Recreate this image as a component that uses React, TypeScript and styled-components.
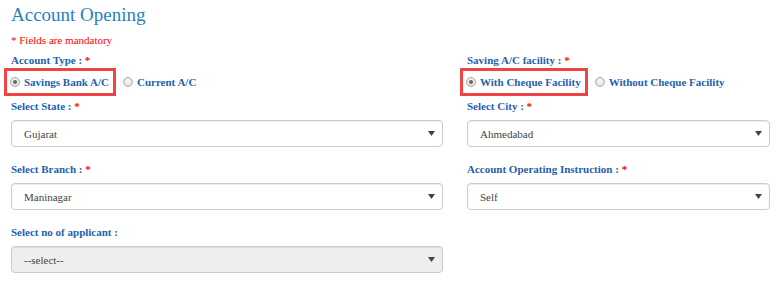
import styled, { createGlobalStyle } from "styled-components";

const serif = `"Liberation Serif", "Times New Roman", serif`;

const GlobalStyle = createGlobalStyle`
  body {
    margin: 0;
    background: #fff;
    font-family: ${serif};
  }
`;

const Page = styled.div`
  padding: 4px 0 0 11px;
  width: 767px;
`;

const Title = styled.h1`
  margin: 0;
  font-size: 19px;
  line-height: 22px;
  font-weight: 400;
  color: #2a7fc1;
`;

const Mandatory = styled.p`
  margin: 6px 0 0;
  font-size: 11px;
  line-height: 16px;
  color: #f00;
`;

const Grid = styled.div`
  display: grid;
  grid-template-columns: 432px 303px;
  column-gap: 24px;
  margin-top: 4px;
`;

const Field = styled.div<{ $last?: boolean }>`
  display: flex;
  flex-direction: column;
  margin-bottom: ${(p) => (p.$last ? "0" : "14px")};
`;

const RadioField = styled.div`
  display: flex;
  flex-direction: column;
  margin-bottom: 2px;
`;

const Label = styled.label`
  font-size: 11px;
  line-height: 16px;
  font-weight: bold;
  color: #1f5fae;
`;

const Req = styled.span`
  color: #f00;
`;

const RadioRow = styled.div`
  display: flex;
  align-items: center;
  margin-left: -7px;
`;

const Option = styled.span<{ $marked?: boolean }>`
  display: flex;
  align-items: center;
  gap: 4px;
  height: 22px;
  padding: 0 4px 0 3px;
  border: 3px solid ${(p) => (p.$marked ? "#f04444" : "transparent")};
  font-size: 11px;
  font-weight: bold;
  color: #1f5fae;
  & + & {
    margin-left: 1px;
  }
`;

const Dot = styled.span<{ $checked?: boolean }>`
  width: 10px;
  height: 10px;
  box-sizing: border-box;
  border-radius: 50%;
  border: 1px solid #a9a9a9;
  background: radial-gradient(circle at 50% 40%, #fafafa 0%, #d6d6d6 100%);
  display: flex;
  align-items: center;
  justify-content: center;
  &::after {
    content: "";
    width: 4px;
    height: 4px;
    border-radius: 50%;
    background: ${(p) => (p.$checked ? "#666" : "transparent")};
  }
`;

const Select = styled.div<{ $disabled?: boolean }>`
  margin-top: 6px;
  height: 27px;
  box-sizing: border-box;
  display: flex;
  align-items: center;
  justify-content: space-between;
  padding: 0 7px 0 12px;
  border: 1px solid #ccc;
  border-radius: 4px;
  background: ${(p) => (p.$disabled ? "#eee" : "#fff")};
  box-shadow: inset 0 1px 1px rgba(0, 0, 0, 0.075);
  font-size: 11px;
  color: #444;
`;

const Arrow = () => (
  <svg width="7" height="5" viewBox="0 0 7 5">
    <path d="M0 0 H7 L3.5 5 Z" fill="#444" />
  </svg>
);

function Radio({ label, checked, marked }: { label: string; checked?: boolean; marked?: boolean }) {
  return (
    <Option $marked={marked}>
      <Dot $checked={checked} />
      {label}
    </Option>
  );
}

function SelectField({ label, value, required, disabled, last }: {
  label: string;
  value: string;
  required?: boolean;
  disabled?: boolean;
  last?: boolean;
}) {
  return (
    <Field $last={last}>
      <Label>
        {label} :{required && <> <Req>*</Req></>}
      </Label>
      <Select $disabled={disabled}>
        <span>{value}</span>
        <Arrow />
      </Select>
    </Field>
  );
}

export default function App() {
  return (
    <>
      <GlobalStyle />
      <Page>
        <Title>Account Opening</Title>
        <Mandatory>* Fields are mandatory</Mandatory>
        <Grid>
          <RadioField>
            <Label>
              Account Type : <Req>*</Req>
            </Label>
            <RadioRow>
              <Radio label="Savings Bank A/C" checked marked />
              <Radio label="Current A/C" />
            </RadioRow>
          </RadioField>
          <RadioField>
            <Label>
              Saving A/C facility : <Req>*</Req>
            </Label>
            <RadioRow>
              <Radio label="With Cheque Facility" checked marked />
              <Radio label="Without Cheque Facility" />
            </RadioRow>
          </RadioField>
          <SelectField label="Select State" value="Gujarat" required />
          <SelectField label="Select City" value="Ahmedabad" required />
          <SelectField label="Select Branch" value="Maninagar" required />
          <SelectField label="Account Operating Instruction" value="Self" required />
          <SelectField label="Select no of applicant" value="--select--" disabled last />
        </Grid>
      </Page>
    </>
  );
}
